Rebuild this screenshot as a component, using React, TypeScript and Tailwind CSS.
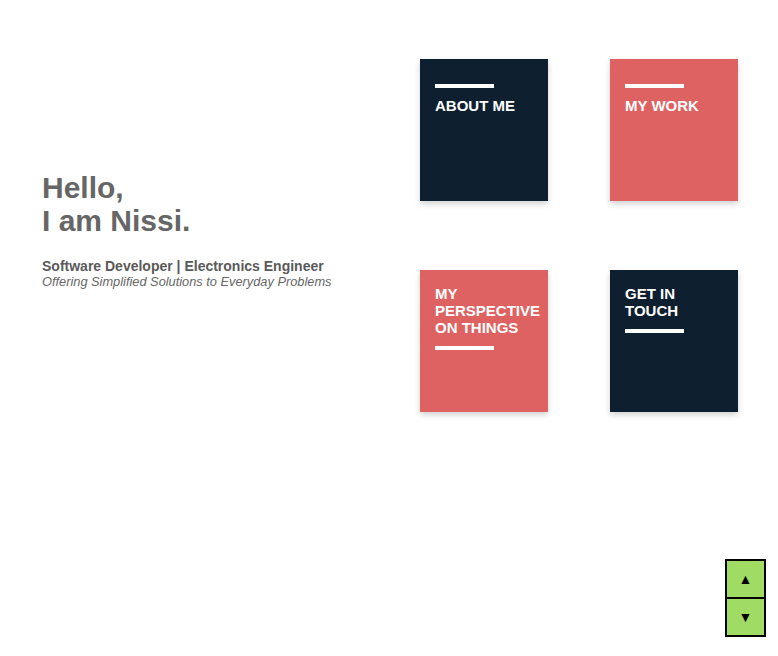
import React from 'react';

type Tile = {
  label: string[];
  color: string;
  barBelow?: boolean;
};

const tiles: Tile[] = [
  { label: ['ABOUT ME'], color: 'bg-[#0e2030]' },
  { label: ['MY WORK'], color: 'bg-[#df6262]' },
  { label: ['MY', 'PERSPECTIVE', 'ON THINGS'], color: 'bg-[#df6262]', barBelow: true },
  { label: ['GET IN', 'TOUCH'], color: 'bg-[#0e2030]', barBelow: true },
];

const Bar: React.FC<{ className?: string }> = ({ className }) => (
  <div className={`h-[4px] w-[59px] bg-white ${className ?? ''}`} />
);

const App: React.FC = () => {
  return (
    <div className="relative h-[656px] w-full bg-white font-['Liberation_Sans',Arial,sans-serif]">
      <div className="flex pl-[42px] pt-[59px]">
        <div className="flex w-[378px] flex-col justify-center pb-[11px]">
          <h1 className="text-[30px] font-bold leading-[33px] text-[#666666]">
            Hello,
            <br />
            I am Nissi.
          </h1>
          <p className="mt-[21px] text-[14px] font-bold leading-[16px] text-[#5a5a5a]">
            Software Developer | Electronics Engineer
          </p>
          <p className="text-[12.8px] italic leading-[15px] text-[#666666]">
            Offering Simplified Solutions to Everyday Problems
          </p>
        </div>
        <div className="grid grid-cols-[128px_128px] gap-x-[62px] gap-y-[69px]">
          {tiles.map((t) => (
            <div
              key={t.label.join(' ')}
              className={`h-[142px] w-[128px] ${t.color} px-[15px] pt-[15px] shadow-[0_3px_6px_rgba(0,0,0,0.18)]`}
            >
              {!t.barBelow && <Bar className="mt-[10px] mb-[9px]" />}
              <div className="text-[15px] font-bold leading-[17px] text-white">
                {t.label.map((l) => (
                  <div key={l}>{l}</div>
                ))}
              </div>
              {t.barBelow && <Bar className="mt-[10px]" />}
            </div>
          ))}
        </div>
      </div>

      <div className="absolute right-[12px] top-[559px] flex flex-col">
        <button className="flex h-[40px] w-[41px] items-center justify-center border-2 border-black bg-[#a0dc64] text-[14px] text-black">
          ▲
        </button>
        <button className="-mt-[2px] flex h-[40px] w-[41px] items-center justify-center border-2 border-black bg-[#a0dc64] text-[14px] text-black">
          ▼
        </button>
      </div>
    </div>
  );
};

export default App;
